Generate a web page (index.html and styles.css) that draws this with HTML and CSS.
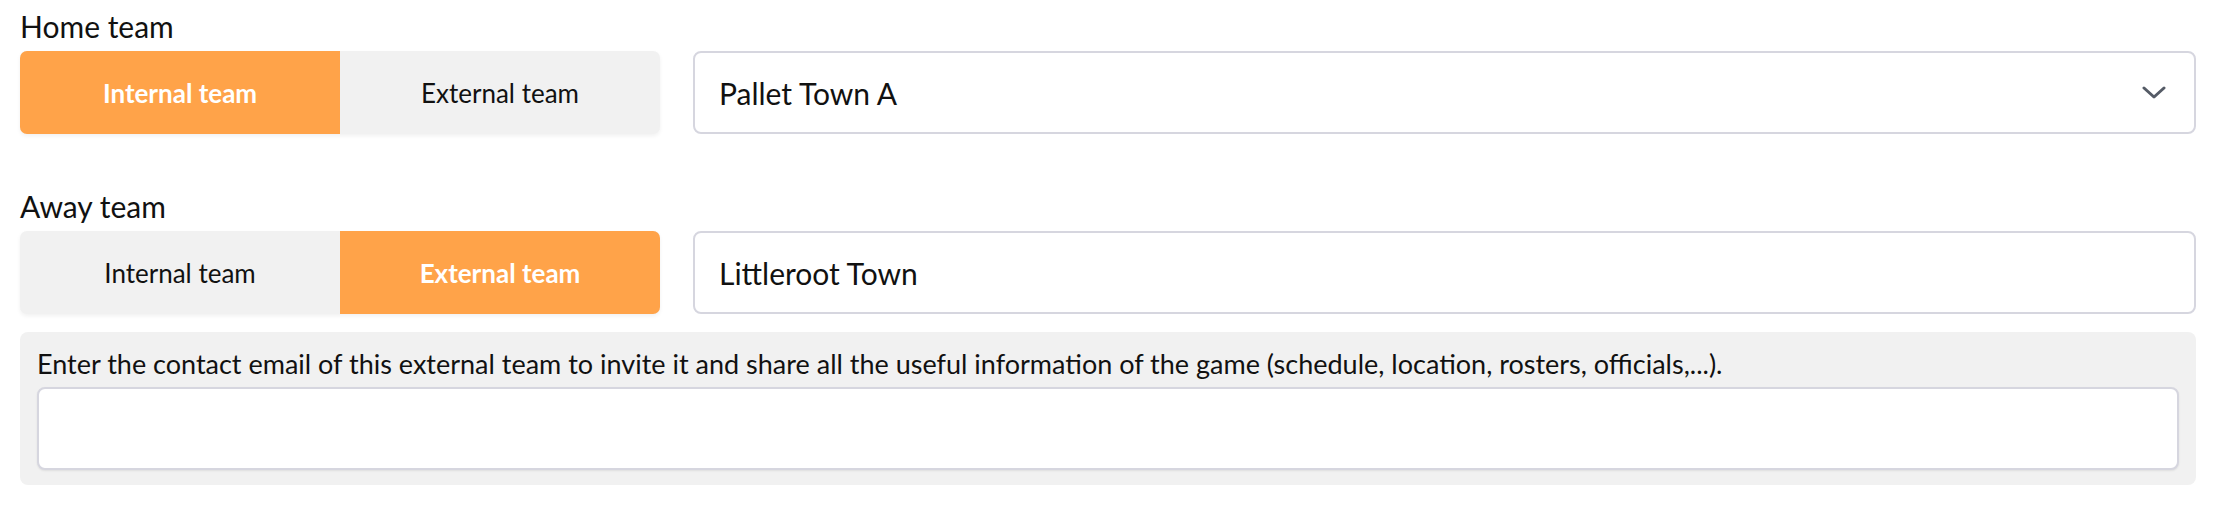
FILE: index.html
```html
<!DOCTYPE html>
<html lang="en">
<head>
    <meta charset="UTF-8">
    <meta name="viewport" content="width=device-width, initial-scale=1.0">
    <title>Game - Teams</title>
    <link rel="stylesheet" href="styles.css">
</head>
<body>

    <div class="teams-form">

        <!-- Home team -->
        <div class="team-section">
            <div class="team-label">Home team</div>
            <div class="team-row">
                <div class="team-toggle">
                    <button class="toggle-btn active">Internal team</button>
                    <button class="toggle-btn">External team</button>
                </div>
                <div class="team-select">
                    <span>Pallet Town A</span>
                    <svg class="chevron" width="24" height="13" viewBox="0 0 24 13">
                        <polyline points="2,2 12,11 22,2" fill="none" stroke="#555b66" stroke-width="3" stroke-linecap="round" stroke-linejoin="round"/>
                    </svg>
                </div>
            </div>
        </div>

        <!-- Away team -->
        <div class="team-section team-section-away">
            <div class="team-label">Away team</div>
            <div class="team-row">
                <div class="team-toggle">
                    <button class="toggle-btn">Internal team</button>
                    <button class="toggle-btn active">External team</button>
                </div>
                <input class="team-input" type="text" value="Littleroot Town">
            </div>
        </div>

        <!-- Invite external team -->
        <div class="invite-box">
            <p class="invite-text">Enter the contact email of this external team to invite it and share all the useful information of the game (schedule, location, rosters, officials,...).</p>
            <input class="invite-input" type="email">
        </div>

    </div>

</body>
</html>
```

FILE: styles.css
```css
body {
    font-family: "Lato", "Liberation Sans", sans-serif;
    margin: 0;
    background-color: #fff;
    color: #111;
}

.teams-form {
    padding: 0 24px 0 20px;
}

/* Team sections */
.team-section {
    margin-bottom: 46px;
}

.team-section-away {
    margin-bottom: 18px;
}

.team-label {
    font-size: 30px;
    line-height: 36px;
    padding: 8px 0 7px;
}

.team-row {
    display: flex;
    gap: 33px;
    height: 83px;
}

/* Internal / external switch */
.team-toggle {
    display: flex;
    width: 640px;
    flex-shrink: 0;
    background-color: #f1f1f1;
    border-radius: 7px;
    overflow: hidden;
    box-shadow: 0 2px 4px rgba(0, 0, 0, 0.06);
}

.toggle-btn {
    flex: 1;
    border: none;
    background: none;
    font-family: inherit;
    font-size: 26px;
    color: #111;
    cursor: pointer;
    padding: 0;
}

.toggle-btn.active {
    background-color: #ffa349;
    color: #fff;
    font-weight: 700;
}

/* Select + inputs */
.team-select,
.team-input,
.invite-input {
    box-sizing: border-box;
    border: 2px solid #d6d6df;
    border-radius: 8px;
    background-color: #fff;
}

.team-select {
    flex: 1;
    display: flex;
    align-items: center;
    justify-content: space-between;
    padding: 0 28px 0 24px;
    font-size: 30px;
    cursor: pointer;
}

.chevron {
    display: block;
}

.team-input {
    flex: 1;
    height: 83px;
    padding: 0 24px;
    font-family: inherit;
    font-size: 30px;
    color: #111;
    outline: none;
}

/* Invite box */
.invite-box {
    background-color: #f1f1f1;
    border-radius: 8px;
    padding: 16px 17px 15px;
}

.invite-text {
    margin: 0 0 7px;
    font-size: 27px;
    line-height: 32px;
}

.invite-input {
    display: block;
    width: 100%;
    height: 83px;
    padding: 0 20px;
    font-family: inherit;
    font-size: 27px;
    outline: none;
    box-shadow: 0 1px 2px rgba(0, 0, 0, 0.08);
}
```
